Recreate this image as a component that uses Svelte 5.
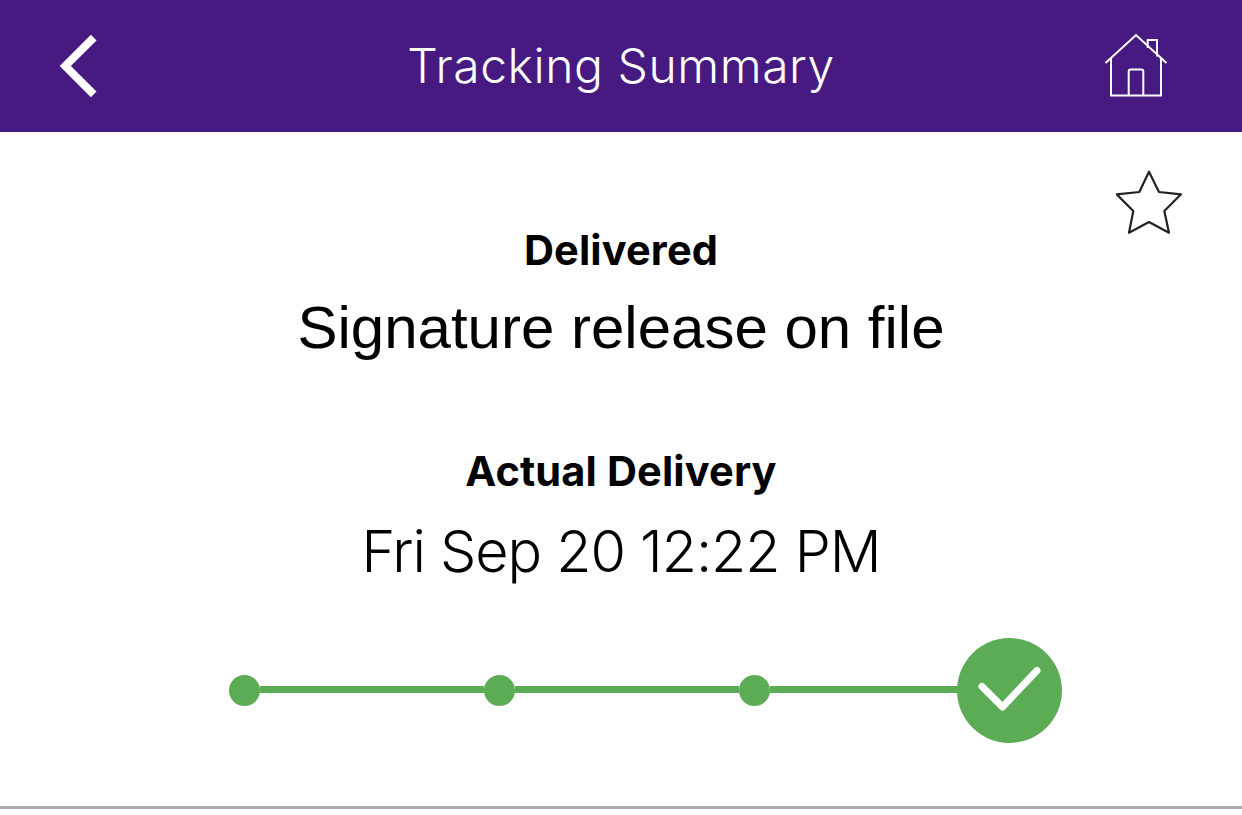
<script>
	const steps = [0, 1, 2]
</script>

<div class="page">
	<header class="topbar">
		<button class="icon-btn back" aria-label="Back">
			<svg width="44" height="68" viewBox="0 0 44 68">
				<path d="M38.7 6.7 L10.3 35 L38.7 63.3" fill="none" stroke="#fff" stroke-width="8" />
			</svg>
		</button>
		<h1>Tracking Summary</h1>
		<button class="icon-btn home" aria-label="Home">
			<svg width="64" height="64" viewBox="0 0 64 64">
				<g fill="none" stroke="#fff" stroke-width="2">
					<path d="M1.5 30 L32 2 L62.5 30" />
					<path d="M7 25 V62.5 H57 V25" />
					<path d="M24.7 62.5 V38.5 Q24.7 36.5 26.7 36.5 H37.3 Q39.3 36.5 39.3 38.5 V62.5" />
					<path d="M43.7 15 V7 H53 V23.5" />
				</g>
			</svg>
		</button>
	</header>

	<main class="summary">
		<button class="star" aria-label="Favourite">
			<svg width="68" height="64" viewBox="0 0 68 64">
				<path d="M33 1.7 L43 22 L65 24.3 L48.3 41 L53 62.7 L33 52 L13 62.7 L17.3 41 L0.7 24.3 L23.3 22 Z" fill="none" stroke="#222" stroke-width="2.2" stroke-linejoin="round" />
			</svg>
		</button>

		<p class="label first">Delivered</p>
		<p class="status">Signature release on file</p>
		<p class="label second">Actual Delivery</p>
		<p class="date">Fri Sep 20 12:22 PM</p>

		<div class="progress">
			{#each steps as step}
				<span class="step">
					<span class="dot"></span>
					<span class="seg"></span>
				</span>
			{/each}
			<span class="done">
				<svg width="105" height="105" viewBox="0 0 105 105">
					<path d="M25 48.5 L45.5 69 L80 32.5" fill="none" stroke="#fff" stroke-width="7" stroke-linecap="round" stroke-linejoin="round" />
				</svg>
			</span>
		</div>
	</main>

	<div class="rule"></div>
</div>

<style>
	:global(body) {
		background: #fff;
	}

	.page {
		display: flex;
		flex-direction: column;
		width: 1242px;
		height: 815px;
		font-family: "Liberation Sans", sans-serif;
		color: #000;
		overflow: hidden;
	}

	.topbar {
		display: grid;
		grid-template-columns: 1fr auto 1fr;
		align-items: center;
		flex: none;
		height: 132px;
		padding: 0 74px;
		box-sizing: border-box;
		background: #461a80;
		color: #fff;
	}

	.topbar h1 {
		margin: 0;
		font-family: Inter, sans-serif;
		font-size: 48px;
		font-weight: 300;
		letter-spacing: 0.55px;
		line-height: 132px;
	}

	.icon-btn,
	.star {
		display: block;
		padding: 0;
		border: 0;
		background: none;
	}

	.back {
		margin: 0 0 2px -19px;
	}

	.home {
		justify-self: end;
		margin-bottom: 2px;
	}

	.icon-btn svg,
	.star svg {
		display: block;
	}

	.summary {
		position: relative;
		display: flex;
		flex-direction: column;
		align-items: center;
		flex: 1;
	}

	.star {
		position: absolute;
		top: 38px;
		right: 58px;
	}

	p {
		margin: 0;
		text-align: center;
	}

	.label {
		font-family: Inter, sans-serif;
		font-size: 41.5px;
		font-weight: 700;
		letter-spacing: 0.15px;
		line-height: 46px;
	}

	.first {
		margin-top: 95px;
	}

	.second {
		margin-top: 85px;
	}

	.status {
		margin-top: 20px;
		font-size: 60px;
		line-height: 70px;
	}

	.date {
		margin-top: 22px;
		font-family: Inter, sans-serif;
		font-size: 57.5px;
		font-weight: 300;
		letter-spacing: -1.05px;
		line-height: 70px;
	}

	.progress {
		display: flex;
		align-items: center;
		align-self: flex-start;
		margin: 52px 0 0 229px;
	}

	.step {
		display: flex;
		align-items: center;
		flex: none;
		width: 255px;
	}

	.dot {
		flex: none;
		width: 31px;
		height: 31px;
		border-radius: 50%;
		background: #5cab55;
	}

	.seg {
		flex: 1;
		height: 7px;
		margin-bottom: 2px;
		background: #5cab55;
	}

	.done {
		position: relative;
		flex: none;
		width: 105px;
		height: 105px;
		margin-left: -37px;
		border-radius: 50%;
		background: #5cab55;
	}

	.done svg {
		display: block;
	}

	.rule {
		flex: none;
		height: 3px;
		margin-bottom: 6px;
		background: #a9a9a9;
	}
</style>
